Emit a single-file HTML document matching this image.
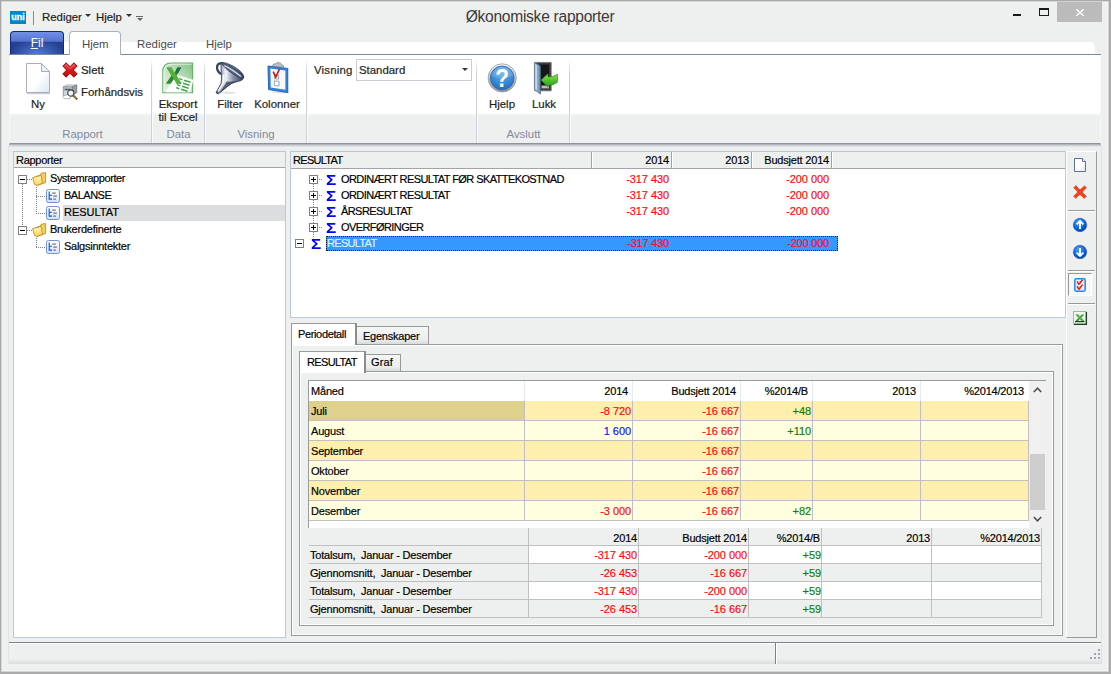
<!DOCTYPE html>
<html lang="nb"><head><meta charset="utf-8"><title>Økonomiske rapporter</title>
<style>
*{box-sizing:border-box;margin:0;padding:0}
html,body{width:1111px;height:674px;overflow:hidden;background:#eef0ef}
body{position:relative;font-family:"Liberation Sans",sans-serif;font-size:12px;color:#000}
.a{position:absolute}
.t{position:absolute;white-space:nowrap;line-height:14px;height:14px}
.r{text-align:right}
.c{text-align:center}
svg{position:absolute;overflow:visible}
.rb{font-size:11.4px;color:#1e1e1e;-webkit-text-stroke:0.2px #1e1e1e}
.gl{font-size:11.4px;color:#8088a0}
.sep{position:absolute;top:59px;width:2px;height:84px;background:linear-gradient(to right,#cdd1d8 0 1px,#fafbfb 1px 2px);-webkit-mask-image:linear-gradient(to bottom,transparent 0,#000 14px);mask-image:linear-gradient(to bottom,transparent 0,#000 14px)}
.tr{font-size:11px;color:#000;letter-spacing:-0.2px;-webkit-text-stroke:0.18px}
.red{color:#f80c0c;letter-spacing:-0.08px}.grn{color:#0c800c;letter-spacing:-0.08px}.blu{color:#1212f2;letter-spacing:-0.08px}
.u{letter-spacing:-0.58px}
.hd{letter-spacing:-0.15px}
.hs{top:152px;width:2px;height:16px;background:linear-gradient(to right,#a3a3a3 0 1px,#fff 1px 2px)}
.sg{font-size:15px;font-weight:bold;color:#0000fc;transform:scaleX(1.14);transform-origin:0 50%;line-height:16px;height:16px}
.tsep{left:1068px;width:27px;height:2px;background:linear-gradient(to bottom,#9a9a9a 0 1px,#fff 1px 2px)}
</style></head><body>

<!-- window frame -->
<div class="a" style="left:0;top:0;width:1111px;height:674px;border-style:solid;border-color:#aaa;border-width:1px 2px 2px 1px"></div>
<div class="a" style="left:1px;top:1px;width:1108px;height:671px;border:1px solid #d2d3d3"></div>
<div class="a" style="left:2px;top:2px;width:1106px;height:669px;border:1px solid #f4f5f5"></div>

<div class="a" style="left:1101px;top:146px;width:1px;height:518px;background:#dfe1e2"></div>
<div class="a" style="left:8px;top:146px;width:1px;height:518px;background:#e1e3e4"></div>
<!-- title bar -->
<div class="a" style="left:10px;top:11px;width:16px;height:13px;background:#0087c9"></div>
<div class="t" style="left:10px;top:11px;width:16px;color:#fff;font-size:9px;font-weight:bold;-webkit-text-stroke:0.3px #fff;line-height:13px;height:13px;text-align:center;letter-spacing:0">uni</div>
<div class="a" style="left:33px;top:11px;width:1px;height:14px;background:#8a8c90"></div>
<div class="t rb" style="left:42px;top:10px">Rediger</div>
<div class="a" style="left:85px;top:14px;border:3px solid transparent;border-top:3px solid #333;border-bottom:0;width:0;height:0"></div>
<div class="t rb" style="left:96px;top:10px">Hjelp</div>
<div class="a" style="left:126px;top:14px;border:3px solid transparent;border-top:3px solid #333;border-bottom:0;width:0;height:0"></div>
<div class="a" style="left:136px;top:16px;width:7px;height:1px;background:#666"></div>
<div class="a" style="left:137px;top:18px;border:3px solid transparent;border-top:3px solid #666;border-bottom:0;width:0;height:0"></div>
<div class="t" style="left:340px;top:8px;width:400px;text-align:center;font-size:15.6px;letter-spacing:-0.28px;line-height:18px;height:18px;color:#3a3a3a">Økonomiske rapporter</div>
<!-- window buttons -->
<div class="a" style="left:1013px;top:14px;width:8px;height:2px;background:#1a1a1a"></div>
<div class="a" style="left:1039px;top:8px;width:10px;height:8px;border:1px solid #1a1a1a;border-top-width:2px"></div>
<div class="a" style="left:1057px;top:2px;width:45px;height:20px;background:#bbb"></div>
<svg style="left:1076px;top:9px" width="8" height="7" viewBox="0 0 8 7"><path d="M0.4 0.2 L7.6 6.8 M7.6 0.2 L0.4 6.8" stroke="#fff" stroke-width="1.5"/></svg>

<!-- tab row -->
<div class="a" style="left:64px;top:42px;width:1031px;height:12px;background:#fff;border-top-right-radius:5px"></div>
<div class="a" style="left:9px;top:54px;width:1092px;height:1px;background:#7d8996"></div>
<div class="a" style="left:10px;top:31px;width:54px;height:23px;border-radius:4px 4px 0 0;border:1px solid #0f2a7c;border-bottom:0;background:radial-gradient(ellipse 55% 75% at 50% 105%,rgba(96,136,236,.85) 0,rgba(96,136,236,0) 100%),linear-gradient(to bottom,#7191e6 0,#5373d0 42%,#24408f 46%,#203b8b 100%)"></div>
<div class="t" style="left:10px;top:36px;width:54px;text-align:center;color:#fff;font-size:12px"><u>F</u>il</div>
<div class="a" style="left:69px;top:31px;width:52px;height:24px;border-radius:4px 4px 0 0;border:1px solid #aab2bd;border-bottom:0;background:#fff"></div>
<div class="t rb" style="left:82px;top:37px;color:#4a4a4a;-webkit-text-stroke:0">Hjem</div>
<div class="t rb" style="left:137px;top:37px;color:#4a4a4a;-webkit-text-stroke:0">Rediger</div>
<div class="t rb" style="left:206px;top:37px;color:#4a4a4a;-webkit-text-stroke:0">Hjelp</div>

<!-- ribbon body -->
<div class="a" style="left:9px;top:55px;width:1092px;height:89px;background:linear-gradient(to bottom,#fff 0,#fff 58px,#f7f8f8 59px,#f1f3f2 60px,#eef0ef 61px,#eef0ef 100%);border:1px solid #f5f6f6;border-top:0;border-bottom:1px solid #8e949c"></div>
<div class="a" style="left:9px;top:144px;width:1092px;height:3px;background:linear-gradient(to bottom,#b0b5bc 0 1px,#cdd0d4 1px 2px,#e0e2e3 2px 3px)"></div>
<div class="sep" style="left:151px"></div>
<div class="sep" style="left:204px"></div>
<div class="sep" style="left:306px"></div>
<div class="sep" style="left:476px"></div>
<div class="sep" style="left:569px"></div>

<!-- group labels -->
<div class="t gl c" style="left:12px;top:127px;width:141px">Rapport</div>
<div class="t gl c" style="left:153px;top:127px;width:51px">Data</div>
<div class="t gl c" style="left:206px;top:127px;width:100px">Visning</div>
<div class="t gl c" style="left:478px;top:127px;width:91px">Avslutt</div>

<!-- ribbon buttons text -->
<div class="t rb c" style="left:18px;top:97px;width:40px">Ny</div>
<div class="t rb" style="left:81px;top:63px">Slett</div>
<div class="t rb" style="left:81px;top:85px">Forhåndsvis</div>
<div class="t rb c" style="left:152px;top:97px;width:52px">Eksport</div>
<div class="t rb c" style="left:152px;top:110px;width:52px">til Excel</div>
<div class="t rb c" style="left:206px;top:97px;width:48px">Filter</div>
<div class="t rb c" style="left:247px;top:97px;width:60px">Kolonner</div>
<div class="t rb" style="left:314px;top:63px;letter-spacing:0.2px">Visning</div>
<div class="a" style="left:356px;top:59px;width:116px;height:22px;background:#fff;border:1px solid #c9ced6"></div>
<div class="t rb" style="left:359px;top:63px">Standard</div>
<div class="a" style="left:462px;top:68px;border:3px solid transparent;border-top:3px solid #333;border-bottom:0;width:0;height:0"></div>
<div class="t rb c" style="left:478px;top:97px;width:48px">Hjelp</div>
<div class="t rb c" style="left:520px;top:97px;width:48px">Lukk</div>

<!-- ===== left panel ===== -->
<div class="a" style="left:13px;top:151px;width:273px;height:487px;border:1px solid #b9c9da;background:#fff"></div>
<div class="a" style="left:14px;top:152px;width:271px;height:16px;background:#eef0ef;border-bottom:1px solid #a3a3a3"></div>
<div class="t tr" style="left:16px;top:153px;letter-spacing:-0.27px">Rapporter</div>
<!-- tree lines -->
<div class="a" style="left:22px;top:184px;width:1px;height:43px;background:repeating-linear-gradient(to bottom,#808080 0 1px,transparent 1px 2px)"></div>
<div class="a" style="left:27px;top:179px;width:5px;height:1px;background:repeating-linear-gradient(to right,#808080 0 1px,transparent 1px 2px)"></div>
<div class="a" style="left:27px;top:230px;width:5px;height:1px;background:repeating-linear-gradient(to right,#808080 0 1px,transparent 1px 2px)"></div>
<div class="a" style="left:36px;top:187px;width:1px;height:27px;background:repeating-linear-gradient(to bottom,#808080 0 1px,transparent 1px 2px)"></div>
<div class="a" style="left:36px;top:196px;width:9px;height:1px;background:repeating-linear-gradient(to right,#808080 0 1px,transparent 1px 2px)"></div>
<div class="a" style="left:36px;top:213px;width:9px;height:1px;background:repeating-linear-gradient(to right,#808080 0 1px,transparent 1px 2px)"></div>
<div class="a" style="left:36px;top:238px;width:1px;height:10px;background:repeating-linear-gradient(to bottom,#808080 0 1px,transparent 1px 2px)"></div>
<div class="a" style="left:36px;top:247px;width:9px;height:1px;background:repeating-linear-gradient(to right,#808080 0 1px,transparent 1px 2px)"></div>
<!-- expand boxes -->
<div class="a" style="left:18px;top:175px;width:9px;height:9px;border:1px solid #808080;background:#fff"></div>
<div class="a" style="left:20px;top:179px;width:5px;height:1px;background:#000"></div>
<div class="a" style="left:18px;top:226px;width:9px;height:9px;border:1px solid #808080;background:#fff"></div>
<div class="a" style="left:20px;top:230px;width:5px;height:1px;background:#000"></div>
<!-- selection -->
<div class="a" style="left:63px;top:205px;width:222px;height:16px;background:#dcddde"></div>
<div class="t tr" style="left:50px;top:171px;letter-spacing:-0.42px">Systemrapporter</div>
<div class="t tr" style="left:64px;top:188px;letter-spacing:-0.49px">BALANSE</div>
<div class="t tr" style="left:64px;top:205px;letter-spacing:0">RESULTAT</div>
<div class="t tr" style="left:50px;top:222px;letter-spacing:-0.25px">Brukerdefinerte</div>
<div class="t tr" style="left:64px;top:239px;letter-spacing:-0.26px">Salgsinntekter</div>

<!-- ===== top right panel ===== -->
<div class="a" style="left:290px;top:151px;width:776px;height:167px;border:1px solid #b9c9da;background:#fff"></div>
<div class="a" style="left:291px;top:152px;width:774px;height:17px;background:#eef0ef;border-bottom:1px solid #a3a3a3"></div>
<div class="a hs" style="left:591px"></div><div class="a hs" style="left:671px"></div><div class="a hs" style="left:751px"></div><div class="a hs" style="left:831px"></div>
<div class="t tr" style="left:293px;top:153px;letter-spacing:-0.7px">RESULTAT</div>
<div class="t tr r" style="left:593px;top:153px;width:76px">2014</div>
<div class="t tr r" style="left:673px;top:153px;width:76px">2013</div>
<div class="t tr r" style="left:753px;top:153px;width:76px">Budsjett 2014</div>
<!-- rows -->
<div class="a" style="left:313px;top:184px;width:1px;height:53px;background:repeating-linear-gradient(to bottom,#808080 0 1px,transparent 1px 2px)"></div>
<div class="a" style="left:326px;top:236px;width:512px;height:15px;background:#3399ff;outline:1px dotted #111;outline-offset:-1px"></div>
<div class="a" style="left:309px;top:175px;width:9px;height:9px;border:1px solid #808080;background:#fff"></div><div class="a" style="left:311px;top:179px;width:5px;height:1px;background:#000"></div><div class="a" style="left:313px;top:177px;width:1px;height:5px;background:#000"></div><div class="a" style="left:319px;top:179px;width:4px;height:1px;background:repeating-linear-gradient(to right,#808080 0 1px,transparent 1px 2px)"></div><div class="t sg" style="left:326px;top:172px">Σ</div><div class="t tr u" style="left:341px;top:172px">ORDINÆRT RESULTAT FØR SKATTEKOSTNAD</div><div class="t tr r red" style="left:593px;top:172px;width:76px">-317 430</div><div class="t tr r red" style="left:753px;top:172px;width:76px">-200 000</div>
<div class="a" style="left:309px;top:191px;width:9px;height:9px;border:1px solid #808080;background:#fff"></div><div class="a" style="left:311px;top:195px;width:5px;height:1px;background:#000"></div><div class="a" style="left:313px;top:193px;width:1px;height:5px;background:#000"></div><div class="a" style="left:319px;top:195px;width:4px;height:1px;background:repeating-linear-gradient(to right,#808080 0 1px,transparent 1px 2px)"></div><div class="t sg" style="left:326px;top:188px">Σ</div><div class="t tr u" style="left:341px;top:188px">ORDINÆRT RESULTAT</div><div class="t tr r red" style="left:593px;top:188px;width:76px">-317 430</div><div class="t tr r red" style="left:753px;top:188px;width:76px">-200 000</div>
<div class="a" style="left:309px;top:207px;width:9px;height:9px;border:1px solid #808080;background:#fff"></div><div class="a" style="left:311px;top:211px;width:5px;height:1px;background:#000"></div><div class="a" style="left:313px;top:209px;width:1px;height:5px;background:#000"></div><div class="a" style="left:319px;top:211px;width:4px;height:1px;background:repeating-linear-gradient(to right,#808080 0 1px,transparent 1px 2px)"></div><div class="t sg" style="left:326px;top:204px">Σ</div><div class="t tr u" style="left:341px;top:204px">ÅRSRESULTAT</div><div class="t tr r red" style="left:593px;top:204px;width:76px">-317 430</div><div class="t tr r red" style="left:753px;top:204px;width:76px">-200 000</div>
<div class="a" style="left:309px;top:223px;width:9px;height:9px;border:1px solid #808080;background:#fff"></div><div class="a" style="left:311px;top:227px;width:5px;height:1px;background:#000"></div><div class="a" style="left:313px;top:225px;width:1px;height:5px;background:#000"></div><div class="a" style="left:319px;top:227px;width:4px;height:1px;background:repeating-linear-gradient(to right,#808080 0 1px,transparent 1px 2px)"></div><div class="t sg" style="left:326px;top:220px">Σ</div><div class="t tr u" style="left:341px;top:220px">OVERFØRINGER</div>
<div class="a" style="left:295px;top:239px;width:9px;height:9px;border:1px solid #808080;background:#fff"></div><div class="a" style="left:297px;top:243px;width:5px;height:1px;background:#000"></div><div class="t sg" style="left:311px;top:236px">Σ</div><div class="t tr" style="left:327px;top:236px;color:#e2efff;letter-spacing:-0.7px">RESULTAT</div><div class="t tr r" style="left:593px;top:236px;width:76px;color:#f41030">-317 430</div><div class="t tr r" style="left:753px;top:236px;width:76px;color:#f41030">-200 000</div>
<!-- ===== right toolbar panel ===== -->
<div class="a" style="left:1066px;top:151px;width:31px;height:487px;border-style:solid;border-width:1px;border-color:#fff #9a9a9a #9a9a9a #fff"></div>
<div class="a tsep" style="top:210px"></div><div class="a tsep" style="top:270px"></div><div class="a tsep" style="top:303px"></div>
<div class="a" style="left:1068px;top:273px;width:24px;height:23px;border-style:solid;border-width:1px;border-color:#9a9a9a #fff #fff #9a9a9a;background:#f6f7f7"></div>

<!-- ===== outer tabs ===== -->
<div class="a" style="left:291px;top:344px;width:772px;height:292px;border:1px solid #9a9a9a;box-shadow:inset 0 0 0 1px #fff"></div>
<div class="a" style="left:356px;top:326px;width:73px;height:18px;border:1px solid #9a9a9a;border-bottom:0;border-left:0;background:linear-gradient(#f4f5f5 0,#eceeee 75%,#d9dbdb 100%)"></div>
<div class="a" style="left:291px;top:323px;width:66px;height:22px;border:1px solid #9a9a9a;border-right:2px solid #8c8c8c;border-bottom:0;background:#fff"></div>
<div class="t tr" style="left:298px;top:327px;letter-spacing:-0.36px">Periodetall</div>
<div class="t tr" style="left:363px;top:329px;letter-spacing:-0.24px">Egenskaper</div>
<!-- inner tabs -->
<div class="a" style="left:299px;top:371px;width:755px;height:255px;border:1px solid #9a9a9a;box-shadow:inset 0 0 0 1px #fff"></div>
<div class="a" style="left:365px;top:354px;width:36px;height:17px;border:1px solid #9a9a9a;border-bottom:0;border-left:0;background:linear-gradient(#f4f5f5 0,#eceeee 75%,#d9dbdb 100%)"></div>
<div class="a" style="left:299px;top:351px;width:67px;height:22px;border:1px solid #9a9a9a;border-right:2px solid #8c8c8c;border-bottom:0;background:#fff"></div>
<div class="t tr" style="left:307px;top:355px;letter-spacing:-0.65px">RESULTAT</div>
<div class="t tr" style="left:371px;top:355px;letter-spacing:0.1px">Graf</div>

<!-- ===== period grid ===== -->
<div class="a" style="left:308px;top:380px;width:738px;height:148px;border-left:1px solid #9a9a9a;border-top:1px solid #9a9a9a;background:#fff"></div>
<div class="t tr" style="left:311px;top:384px">Måned</div><div class="a" style="left:524px;top:381px;width:1px;height:20px;background:#e3ecf7"></div><div class="t tr r" style="left:525px;top:384px;width:103px">2014</div><div class="a" style="left:632px;top:381px;width:1px;height:20px;background:#e3ecf7"></div><div class="t tr r" style="left:633px;top:384px;width:103px">Budsjett 2014</div><div class="a" style="left:740px;top:381px;width:1px;height:20px;background:#e3ecf7"></div><div class="t tr r" style="left:741px;top:384px;width:67px">%2014/B</div><div class="a" style="left:812px;top:381px;width:1px;height:20px;background:#e3ecf7"></div><div class="t tr r" style="left:813px;top:384px;width:103px">2013</div><div class="a" style="left:920px;top:381px;width:1px;height:20px;background:#e3ecf7"></div><div class="t tr r" style="left:921px;top:384px;width:103px">%2014/2013</div>
<div class="a" style="left:309px;top:401px;width:720px;height:20px;background:#ffefae;border-bottom:1px solid #c0c0c0"></div><div class="a" style="left:309px;top:401px;width:215px;height:19px;background:#dfd08e"></div><div class="a" style="left:524px;top:401px;width:1px;height:20px;background:#c0c0c0"></div><div class="a" style="left:632px;top:401px;width:1px;height:20px;background:#c0c0c0"></div><div class="a" style="left:740px;top:401px;width:1px;height:20px;background:#c0c0c0"></div><div class="a" style="left:812px;top:401px;width:1px;height:20px;background:#c0c0c0"></div><div class="a" style="left:920px;top:401px;width:1px;height:20px;background:#c0c0c0"></div><div class="a" style="left:1028px;top:401px;width:1px;height:20px;background:#c0c0c0"></div><div class="t tr" style="left:311px;top:404px">Juli</div><div class="t tr r red" style="left:525px;top:404px;width:106px">-8 720</div><div class="t tr r red" style="left:633px;top:404px;width:106px">-16 667</div><div class="t tr r grn" style="left:741px;top:404px;width:70px">+48</div>
<div class="a" style="left:309px;top:421px;width:720px;height:20px;background:#ffffe0;border-bottom:1px solid #c0c0c0"></div><div class="a" style="left:524px;top:421px;width:1px;height:20px;background:#c0c0c0"></div><div class="a" style="left:632px;top:421px;width:1px;height:20px;background:#c0c0c0"></div><div class="a" style="left:740px;top:421px;width:1px;height:20px;background:#c0c0c0"></div><div class="a" style="left:812px;top:421px;width:1px;height:20px;background:#c0c0c0"></div><div class="a" style="left:920px;top:421px;width:1px;height:20px;background:#c0c0c0"></div><div class="a" style="left:1028px;top:421px;width:1px;height:20px;background:#c0c0c0"></div><div class="t tr" style="left:311px;top:424px">August</div><div class="t tr r blu" style="left:525px;top:424px;width:106px">1 600</div><div class="t tr r red" style="left:633px;top:424px;width:106px">-16 667</div><div class="t tr r grn" style="left:741px;top:424px;width:70px">+110</div>
<div class="a" style="left:309px;top:441px;width:720px;height:20px;background:#ffefae;border-bottom:1px solid #c0c0c0"></div><div class="a" style="left:524px;top:441px;width:1px;height:20px;background:#c0c0c0"></div><div class="a" style="left:632px;top:441px;width:1px;height:20px;background:#c0c0c0"></div><div class="a" style="left:740px;top:441px;width:1px;height:20px;background:#c0c0c0"></div><div class="a" style="left:812px;top:441px;width:1px;height:20px;background:#c0c0c0"></div><div class="a" style="left:920px;top:441px;width:1px;height:20px;background:#c0c0c0"></div><div class="a" style="left:1028px;top:441px;width:1px;height:20px;background:#c0c0c0"></div><div class="t tr" style="left:311px;top:444px">September</div><div class="t tr r red" style="left:633px;top:444px;width:106px">-16 667</div>
<div class="a" style="left:309px;top:461px;width:720px;height:20px;background:#ffffe0;border-bottom:1px solid #c0c0c0"></div><div class="a" style="left:524px;top:461px;width:1px;height:20px;background:#c0c0c0"></div><div class="a" style="left:632px;top:461px;width:1px;height:20px;background:#c0c0c0"></div><div class="a" style="left:740px;top:461px;width:1px;height:20px;background:#c0c0c0"></div><div class="a" style="left:812px;top:461px;width:1px;height:20px;background:#c0c0c0"></div><div class="a" style="left:920px;top:461px;width:1px;height:20px;background:#c0c0c0"></div><div class="a" style="left:1028px;top:461px;width:1px;height:20px;background:#c0c0c0"></div><div class="t tr" style="left:311px;top:464px">Oktober</div><div class="t tr r red" style="left:633px;top:464px;width:106px">-16 667</div>
<div class="a" style="left:309px;top:481px;width:720px;height:20px;background:#ffefae;border-bottom:1px solid #c0c0c0"></div><div class="a" style="left:524px;top:481px;width:1px;height:20px;background:#c0c0c0"></div><div class="a" style="left:632px;top:481px;width:1px;height:20px;background:#c0c0c0"></div><div class="a" style="left:740px;top:481px;width:1px;height:20px;background:#c0c0c0"></div><div class="a" style="left:812px;top:481px;width:1px;height:20px;background:#c0c0c0"></div><div class="a" style="left:920px;top:481px;width:1px;height:20px;background:#c0c0c0"></div><div class="a" style="left:1028px;top:481px;width:1px;height:20px;background:#c0c0c0"></div><div class="t tr" style="left:311px;top:484px">November</div><div class="t tr r red" style="left:633px;top:484px;width:106px">-16 667</div>
<div class="a" style="left:309px;top:501px;width:720px;height:20px;background:#ffffe0;border-bottom:1px solid #c0c0c0"></div><div class="a" style="left:524px;top:501px;width:1px;height:20px;background:#c0c0c0"></div><div class="a" style="left:632px;top:501px;width:1px;height:20px;background:#c0c0c0"></div><div class="a" style="left:740px;top:501px;width:1px;height:20px;background:#c0c0c0"></div><div class="a" style="left:812px;top:501px;width:1px;height:20px;background:#c0c0c0"></div><div class="a" style="left:920px;top:501px;width:1px;height:20px;background:#c0c0c0"></div><div class="a" style="left:1028px;top:501px;width:1px;height:20px;background:#c0c0c0"></div><div class="t tr" style="left:311px;top:504px">Desember</div><div class="t tr r red" style="left:525px;top:504px;width:106px">-3 000</div><div class="t tr r red" style="left:633px;top:504px;width:106px">-16 667</div><div class="t tr r grn" style="left:741px;top:504px;width:70px">+82</div>
<div class="a" style="left:1029px;top:381px;width:17px;height:147px;background:#f0f0f0"></div><div class="a" style="left:1030px;top:454px;width:15px;height:56px;background:#cdcdcd"></div><svg style="left:1033px;top:387px" width="9" height="6" viewBox="0 0 9 6"><path d="M0.8 5 L4.5 1.2 L8.2 5" fill="none" stroke="#505050" stroke-width="1.6"/></svg><svg style="left:1033px;top:516px" width="9" height="6" viewBox="0 0 9 6"><path d="M0.8 1 L4.5 4.8 L8.2 1" fill="none" stroke="#505050" stroke-width="1.6"/></svg>
<!-- ===== summary grid ===== -->
<div class="a" style="left:309px;top:528px;width:733px;height:18px;background:#eef0ef;border-bottom:1px solid #c0c0c0"></div><div class="a" style="left:528px;top:528px;width:1px;height:90px;background:#c0c0c0"></div><div class="a" style="left:638px;top:528px;width:1px;height:90px;background:#c0c0c0"></div><div class="t tr r" style="left:530px;top:531px;width:107px">2014</div><div class="a" style="left:748px;top:528px;width:1px;height:90px;background:#c0c0c0"></div><div class="t tr r" style="left:640px;top:531px;width:107px">Budsjett 2014</div><div class="a" style="left:821px;top:528px;width:1px;height:90px;background:#c0c0c0"></div><div class="t tr r" style="left:750px;top:531px;width:70px">%2014/B</div><div class="a" style="left:931px;top:528px;width:1px;height:90px;background:#c0c0c0"></div><div class="t tr r" style="left:823px;top:531px;width:107px">2013</div><div class="a" style="left:1041px;top:528px;width:1px;height:90px;background:#c0c0c0"></div><div class="t tr r" style="left:933px;top:531px;width:107px">%2014/2013</div>
<div class="a" style="left:309px;top:546px;width:733px;height:18px;background:#eef0ef;border-bottom:1px solid #c0c0c0"></div><div class="a" style="left:529px;top:546px;width:513px;height:17px;background:#fff"></div><div class="t tr" style="left:310px;top:548px">Totalsum,&nbsp; Januar - Desember</div><div class="t tr r red" style="left:530px;top:548px;width:107px">-317 430</div><div class="t tr r red" style="left:640px;top:548px;width:107px">-200 000</div><div class="t tr r grn" style="left:750px;top:548px;width:71px">+59</div>
<div class="a" style="left:309px;top:564px;width:733px;height:18px;background:#eef0ef;border-bottom:1px solid #c0c0c0"></div><div class="t tr" style="left:310px;top:566px">Gjennomsnitt,&nbsp; Januar - Desember</div><div class="t tr r red" style="left:530px;top:566px;width:107px">-26 453</div><div class="t tr r red" style="left:640px;top:566px;width:107px">-16 667</div><div class="t tr r grn" style="left:750px;top:566px;width:71px">+59</div>
<div class="a" style="left:309px;top:582px;width:733px;height:18px;background:#eef0ef;border-bottom:1px solid #c0c0c0"></div><div class="a" style="left:529px;top:582px;width:513px;height:17px;background:#fff"></div><div class="t tr" style="left:310px;top:584px">Totalsum,&nbsp; Januar - Desember</div><div class="t tr r red" style="left:530px;top:584px;width:107px">-317 430</div><div class="t tr r red" style="left:640px;top:584px;width:107px">-200 000</div><div class="t tr r grn" style="left:750px;top:584px;width:71px">+59</div>
<div class="a" style="left:309px;top:600px;width:733px;height:18px;background:#eef0ef;border-bottom:1px solid #c0c0c0"></div><div class="t tr" style="left:310px;top:602px">Gjennomsnitt,&nbsp; Januar - Desember</div><div class="t tr r red" style="left:530px;top:602px;width:107px">-26 453</div><div class="t tr r red" style="left:640px;top:602px;width:107px">-16 667</div><div class="t tr r grn" style="left:750px;top:602px;width:71px">+59</div>
<div class="a" style="left:528px;top:528px;width:1px;height:90px;background:#c0c0c0"></div><div class="a" style="left:638px;top:528px;width:1px;height:90px;background:#c0c0c0"></div><div class="a" style="left:748px;top:528px;width:1px;height:90px;background:#c0c0c0"></div><div class="a" style="left:821px;top:528px;width:1px;height:90px;background:#c0c0c0"></div><div class="a" style="left:931px;top:528px;width:1px;height:90px;background:#c0c0c0"></div><div class="a" style="left:1041px;top:528px;width:1px;height:90px;background:#c0c0c0"></div>
<!-- ===== status bar ===== -->
<div class="a" style="left:9px;top:642px;width:1092px;height:1px;background:#7a828a"></div><div class="a" style="left:9px;top:643px;width:1092px;height:21px;background:linear-gradient(to bottom,#fff 0 1px,#eef0ef 1px 16px,#e5e7e8 18px,#dbdde0 21px)"></div><div class="a" style="left:775px;top:643px;width:1px;height:21px;background:#7a828a"></div><div class="a" style="left:776px;top:643px;width:1px;height:21px;background:#fff"></div><div class="a" style="left:1098px;top:649px;width:2px;height:2px;background:#a0a4b0"></div><div class="a" style="left:1094px;top:653px;width:2px;height:2px;background:#a0a4b0"></div><div class="a" style="left:1098px;top:653px;width:2px;height:2px;background:#a0a4b0"></div><div class="a" style="left:1090px;top:657px;width:2px;height:2px;background:#a0a4b0"></div><div class="a" style="left:1094px;top:657px;width:2px;height:2px;background:#a0a4b0"></div><div class="a" style="left:1098px;top:657px;width:2px;height:2px;background:#a0a4b0"></div>

<!--MAINEND-->
<!--ICONS-START-->
<svg width="0" height="0" style="left:0;top:0"><defs>
<linearGradient id="gPage" x1="0" y1="0" x2="1" y2="1"><stop offset="0" stop-color="#fff"/><stop offset=".55" stop-color="#fdfeff"/><stop offset="1" stop-color="#dbe6f6"/></linearGradient>
<linearGradient id="gRed" x1="0" y1="0" x2="0" y2="1"><stop offset="0" stop-color="#e64a4a"/><stop offset=".5" stop-color="#de1818"/><stop offset="1" stop-color="#b80c0c"/></linearGradient>
<linearGradient id="gXl" x1="0" y1="1" x2="1" y2="0"><stop offset="0" stop-color="#e4f2e2"/><stop offset=".5" stop-color="#c6e2c4"/><stop offset="1" stop-color="#7fbf80"/></linearGradient>
<linearGradient id="gFun" x1="0" y1="0" x2="1" y2="0"><stop offset="0" stop-color="#3c4763"/><stop offset=".35" stop-color="#f4f6fa"/><stop offset=".6" stop-color="#8e98b0"/><stop offset="1" stop-color="#2c3550"/></linearGradient>
<radialGradient id="gHelp" cx=".5" cy=".25" r=".8"><stop offset="0" stop-color="#6db0ea"/><stop offset=".6" stop-color="#3a8ad6"/><stop offset="1" stop-color="#1f66b8"/></radialGradient>
<linearGradient id="gRing" x1="0" y1="0" x2="0" y2="1"><stop offset="0" stop-color="#f4f5f7"/><stop offset=".5" stop-color="#c4c9d0"/><stop offset="1" stop-color="#8e949e"/></linearGradient>
<linearGradient id="gDoor" x1="0" y1="0" x2="1" y2="0"><stop offset="0" stop-color="#b8d2e8"/><stop offset="1" stop-color="#5f88ac"/></linearGradient>
<linearGradient id="gGrn" x1="0" y1="0" x2="0" y2="1"><stop offset="0" stop-color="#9be25a"/><stop offset=".5" stop-color="#4ec22c"/><stop offset="1" stop-color="#2f9a1a"/></linearGradient>
<linearGradient id="gFold" x1="0" y1="0" x2="0" y2="1"><stop offset="0" stop-color="#fff7c0"/><stop offset="1" stop-color="#f8d85c"/></linearGradient>
<radialGradient id="gBall" cx=".4" cy=".3" r=".8"><stop offset="0" stop-color="#4aa0ff"/><stop offset=".6" stop-color="#0a62e0"/><stop offset="1" stop-color="#0440a8"/></radialGradient>
<linearGradient id="gRep" x1="0" y1="0" x2="0" y2="1"><stop offset="0" stop-color="#fff"/><stop offset="1" stop-color="#d4e2f8"/></linearGradient>
<g id="iRep"><rect x=".5" y=".5" width="13" height="13" rx="2" fill="url(#gRep)" stroke="#7391d8"/><path d="M3.2 2.5v7.6h2.8M3.2 6.2h2.8" fill="none" stroke="#0a58d8" stroke-width="1.1"/><rect x="6.3" y="3.4" width="3.4" height="1.5" fill="#85898f"/><rect x="7.3" y="6.4" width="3.6" height="1.5" fill="#85898f"/><rect x="7.3" y="9.4" width="2.6" height="1.5" fill="#85898f"/></g>
<g id="iFolder"><path d="M5 13.3 L3.8 4.6 L8.6 3 L9 1.4 L13.6 .5 L13.6 10.6 Z" fill="#f3cf5c" stroke="#c68a22" stroke-width=".9"/><path d="M.6 5.6 L9.2 3.4 L10.4 11.4 L5 13.4 L2.6 12.4 Z" fill="url(#gFold)" stroke="#c68a22" stroke-width=".9"/></g>
</defs></svg>

<!-- Ny page 24x30 @26,63 -->
<svg style="left:26px;top:63px" width="25" height="32" viewBox="0 0 25 32"><path d="M1 30.5 H24" stroke="#c9ccd2" stroke-width="1.4"/><path d="M.5 .5 H15.5 L23.5 8.5 V29.5 H.5 Z" fill="url(#gPage)" stroke="#a9adb6"/><path d="M15.5 .5 V8.5 H23.5 Z" fill="#e6eefa" stroke="#a9adb6" stroke-linejoin="round"/></svg>
<!-- Slett X -->
<svg style="left:62px;top:62px" width="16" height="16" viewBox="0 0 16 16"><path d="M.8 4.1 L4.1 .8 L8 4.7 L11.9 .8 L15.2 4.1 L11.3 8 L15.2 11.9 L11.9 15.2 L8 11.3 L4.1 15.2 L.8 11.9 L4.7 8 Z" fill="url(#gRed)" stroke="#8a0808" stroke-width="1" stroke-linejoin="round"/><path d="M2.2 4.1 L4.1 2.2 L8 6.1 L11.9 2.2 L12.8 3.1 L8 7.6 L4.1 3.8 Z" fill="#fff" opacity=".18"/></svg>
<!-- Forhåndsvis -->
<svg style="left:62px;top:84px" width="16" height="16" viewBox="0 0 16 16"><path d="M1.2 3 L5 1 H14.8 L10 3 Z" fill="#eef0f1" stroke="#8a8d92" stroke-width=".7"/><path d="M10 3 L14.8 1 V8.6 L10 11.6 Z" fill="#9b9ea3" stroke="#6a6d72" stroke-width=".7"/><rect x="1.2" y="3" width="8.8" height="8.6" fill="#d4d6d9" stroke="#7a7d82" stroke-width=".7"/><rect x="2.4" y="4.6" width="6.4" height="1.8" fill="#5d6474"/><rect x="3.4" y="3.6" width="1.2" height=".8" fill="#4cc04c"/><path d="M.6 13.2 L3 11 H9 L8 14.6 H2 Z" fill="#fff" stroke="#9a9da2" stroke-width=".7"/><circle cx="8.8" cy="9" r="3.1" fill="#eaf4fc" stroke="#3a3e46" stroke-width="1.1"/><path d="M11.2 11.4 L14.6 14.8" stroke="#7a5a22" stroke-width="2.1" stroke-linecap="round"/><path d="M11.6 11.8 L14.4 14.6" stroke="#e8b890" stroke-width="1" stroke-dasharray="1 1"/></svg>
<!-- Excel 32 -->
<svg style="left:162px;top:62px" width="32" height="32" viewBox="0 0 32 32"><path d="M.8 30.8 V9.5 Q.8 1 9.5 1 H30.6 V30.8 Z" fill="url(#gXl)" stroke="#63b066" stroke-width="1.1"/><path d="M2 29.6 V9.8 Q2 2.2 9.8 2.2 H29.4" fill="none" stroke="#fff" stroke-width="1" opacity=".7"/><path d="M14.5 12.6 L31.4 18 L28 30.2 H3.2 Z" fill="#fff"/><path d="M14.5 12.6 L31.4 18" stroke="#cfe6cf" stroke-width=".8"/><g stroke="#44a44a" stroke-width="1.5"><path d="M17 16.6 L20.4 17.7 M22 18.2 L28.6 20.3 M16 19.6 L19.4 20.7 M21 21.2 L27.6 23.3 M15 22.6 L18.4 23.7 M20 24.2 L26.6 26.3 M14 25.6 L17.4 26.7 M19 27.2 L25.6 29.3"/></g><path d="M4.6 5.6 H9.4 L12.4 10.8 L15.4 5.6 H19.2 L14.6 13.6 L19.4 21.8 H14.6 L12 17 L8.6 21.8 H3.8 L9.4 13.4 Z" fill="#2f8a34"/><path d="M4.6 5.6 H9.4 L19.4 21.8 H14.6 L12 17 L9.4 13.4 Z" fill="#5cbc3c" opacity=".8"/><path d="M15.4 5.6 H19.2 L15.6 12 L13.6 9 Z" fill="#1f6e54"/></svg>
<!-- Filter funnel 32 -->
<svg style="left:214px;top:61px" width="32" height="34" viewBox="0 0 32 34"><ellipse cx="14" cy="31.8" rx="8" ry="1.5" fill="#000" opacity=".10"/><path d="M7.5 2.2 Q2.2 2.5 3.2 8 Q4.2 12.2 8.2 13.2" fill="none" stroke="#3a4562" stroke-width="2.4"/><path d="M7 1.5 Q12 1 19 5 Q28.5 10.5 29.8 15.5 Q29.6 19.5 24.5 20.2 Q17 21.5 12.5 26 L4.2 33 L2 31.8 L7 22.5 Q8 18 7.2 12 Z" fill="url(#gFun)" stroke="#2f3953" stroke-width=".8"/><path d="M12.5 20.5 Q20 21 25 19.5 Q17 22.5 12.8 26.5 L6 32 Z" fill="#2c3550" opacity=".75"/><path d="M7.3 1.8 Q13 2 21 8 Q29 14 29.6 16.4 Q27 18.2 18.5 12.6 Q9.5 6.4 7.3 1.8 Z" fill="#56627f" stroke="#2a334c" stroke-width=".8"/><path d="M10.3 4.6 Q18 8.2 27 15.6" fill="none" stroke="#d5dbe8" stroke-width="1.2"/><path d="M9.4 14 Q10 19 8.6 22.8 L4.2 30.5" fill="none" stroke="#fff" stroke-width="1.7" opacity=".9"/></svg>
<!-- Kolonner clipboard -->
<svg style="left:264px;top:61px" width="28" height="34" viewBox="0 0 28 34"><ellipse cx="17" cy="31.2" rx="9" ry="1.5" fill="#000" opacity=".10"/><path d="M4 5 L23.8 7.4 V31.6 L4.6 28.6 Z" fill="#2f82d8" stroke="#1c5cae" stroke-width=".9"/><path d="M6.4 7.6 L21.4 9.4 V28.8 L6.8 26.4 Z" fill="#f7f8fa"/><path d="M8.5 4.4 Q9 2.5 12 2.8 L13 1.6 L16.5 2 L17 3.4 Q20 3.8 19.8 6.4 L8.6 5.2 Z" fill="#bcc0c7" stroke="#7a7e86" stroke-width=".7"/><rect x="10.4" y="12.4" width="4.2" height="4.2" fill="#fff" stroke="#8a93a4" stroke-width=".8" transform="skewY(6)"/><rect x="10.4" y="18.8" width="4.6" height="4.6" fill="#fff" stroke="#8a93a4" stroke-width=".8" transform="skewY(6)"/><path d="M9.2 10.6 L11.8 16.2 L15.4 8.2" fill="none" stroke="#cc1616" stroke-width="1.6"/></svg>
<!-- Hjelp -->
<svg style="left:487px;top:63px" width="30" height="30" viewBox="0 0 30 30"><circle cx="15.2" cy="14.9" r="14.1" fill="url(#gRing)" stroke="#858b94" stroke-width=".7"/><circle cx="15.2" cy="14.9" r="11.9" fill="url(#gHelp)" stroke="#2a5c9c" stroke-width=".7"/><path d="M4 12.5 A11.6 11.6 0 0 1 26.4 12.5 Q15 17.5 4 12.5 Z" fill="#fff" opacity=".15"/><text transform="translate(15.2,23.6) scale(1,1.16)" x="0" y="0" text-anchor="middle" font-family="Liberation Sans,sans-serif" font-weight="bold" font-size="22.5" fill="#fff">?</text></svg>
<!-- Lukk door -->
<svg style="left:533px;top:61px" width="26" height="34" viewBox="0 0 26 34"><path d="M1.8 1.4 H18.2 V29.8 H1.8 Z" fill="#3a3a3a" stroke="#7a7a7a" stroke-width=".9"/><path d="M5.5 3.6 H16 V27.4 H5.5 Z" fill="#161616"/><path d="M8.5 24.5 H16 V27.4 H8.5 Z" fill="#bdbdbd"/><path d="M1.4 1.6 L7.4 4.8 V33.2 L1.4 28.6 Z" fill="url(#gDoor)" stroke="#4a6a88" stroke-width=".7"/><path d="M2.6 4 L4 4.8 V29 L2.6 28 Z" fill="#fff" opacity=".45"/><path d="M8 19 L15 12.8 V16 Q20.5 16.2 24.4 13.2 Q25 18 24.2 21.4 Q20 24.6 15 24.2 V26.2 Z" fill="url(#gGrn)" stroke="#2c8a18" stroke-width=".7" stroke-linejoin="round"/></svg>

<!-- tree icons -->
<svg style="left:32px;top:172px" width="15" height="14" viewBox="0 0 15 14"><use href="#iFolder"/></svg>
<svg style="left:32px;top:223px" width="15" height="14" viewBox="0 0 15 14"><use href="#iFolder"/></svg>
<svg style="left:46px;top:189px" width="14" height="14"><use href="#iRep"/></svg>
<svg style="left:46px;top:206px" width="14" height="14"><use href="#iRep"/></svg>
<svg style="left:46px;top:240px" width="14" height="14"><use href="#iRep"/></svg>

<!-- toolbar icons -->
<svg style="left:1074px;top:158px" width="13" height="15" viewBox="0 0 13 15"><path d="M.5 .5 H8.5 L11.5 3.5 V13.5 H.5 Z" fill="url(#gPage)" stroke="#5f6fa0"/><path d="M8.5 .5 V3.5 H11.5" fill="#fff" stroke="#5f6fa0"/></svg>
<svg style="left:1073px;top:185px" width="14" height="14" viewBox="0 0 14 14"><path d="M3 .6 Q5 3.5 7 4.8 Q9.5 3 11.5 .8 L13.4 3 Q10.6 5 9.3 7 Q11 9.5 13.4 11.2 L11.2 13.4 Q9 10.8 7 9.4 Q4.6 11 2.8 13.4 L.6 11 Q3.4 9 4.7 7 Q3.2 4.6 .6 2.8 Z" fill="#f04420" stroke="#d83210" stroke-width=".6"/></svg>
<svg style="left:1073px;top:218px" width="14" height="14" viewBox="0 0 14 14"><circle cx="7" cy="7" r="6.7" fill="url(#gBall)" stroke="#0a3c9a" stroke-width=".5"/><path d="M7 3 V11 M3.6 6.4 L7 3 L10.4 6.4" fill="none" stroke="#fff" stroke-width="1.9"/></svg>
<svg style="left:1073px;top:245px" width="14" height="14" viewBox="0 0 14 14"><circle cx="7" cy="7" r="6.7" fill="url(#gBall)" stroke="#0a3c9a" stroke-width=".5"/><path d="M7 3 V11 M3.6 7.6 L7 11 L10.4 7.6" fill="none" stroke="#fff" stroke-width="1.9"/></svg>
<svg style="left:1074px;top:278px" width="12" height="14" viewBox="0 0 12 14"><rect x=".8" y=".8" width="10.4" height="12.4" rx="1.4" fill="#e9ebee" stroke="#2b86e2" stroke-width="1.5"/><rect x="3.2" y="3.6" width="3.2" height="3" fill="#fff" stroke="#a8aeb8" stroke-width=".5"/><rect x="3.2" y="8.4" width="3.2" height="3" fill="#fff" stroke="#a8aeb8" stroke-width=".5"/><path d="M3 3.6 L5 6.2 L8.6 1.8 M3 8.4 L5 11 L8.6 6.6" fill="none" stroke="#e01818" stroke-width="1.4"/></svg>
<svg style="left:1073px;top:311px" width="14" height="14" viewBox="0 0 14 14"><rect x=".5" y=".5" width="12.5" height="12.5" fill="#f2f8f0" stroke="#8cc68e"/><path d="M1 13.3 H13.4 V1" fill="none" stroke="#1d3f20" stroke-width="1.3"/><path d="M2 10.6 H11.4" stroke="#1d3f20" stroke-width="1.2"/><path d="M2.4 3.4 H5.2 L6.9 5.6 L8.8 3.4 H11.4 L8.3 6.8 L11.4 10 H8.6 L6.9 8 L5.2 10 H2.4 L5.5 6.8 Z" fill="#2f9a38"/><path d="M2.4 3.4 H5.2 L11.4 10 H8.6 Z" fill="#57c04c" opacity=".7"/></svg>
<!--ICONS-END-->

</body></html>
